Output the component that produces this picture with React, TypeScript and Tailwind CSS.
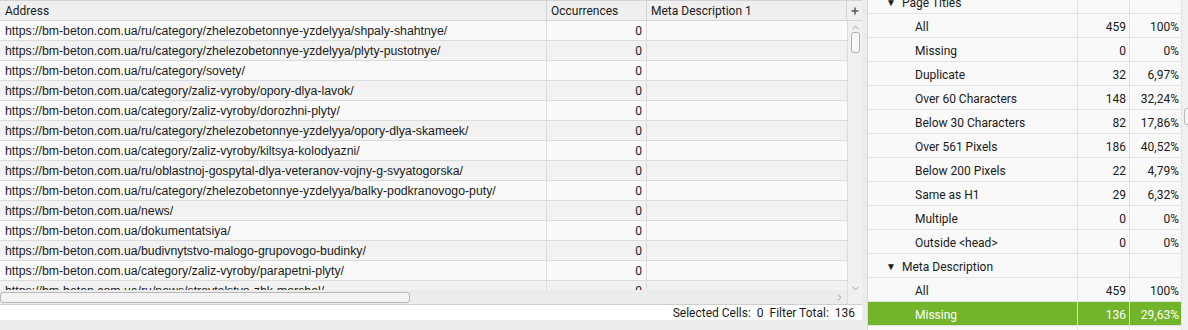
import { ChevronUp, ChevronDown, ChevronRight, Plus } from 'lucide-react';

const urls = [
  'https://bm-beton.com.ua/ru/category/zhelezobetonnye-yzdelyya/shpaly-shahtnye/',
  'https://bm-beton.com.ua/ru/category/zhelezobetonnye-yzdelyya/plyty-pustotnye/',
  'https://bm-beton.com.ua/ru/category/sovety/',
  'https://bm-beton.com.ua/category/zaliz-vyroby/opory-dlya-lavok/',
  'https://bm-beton.com.ua/category/zaliz-vyroby/dorozhni-plyty/',
  'https://bm-beton.com.ua/ru/category/zhelezobetonnye-yzdelyya/opory-dlya-skameek/',
  'https://bm-beton.com.ua/category/zaliz-vyroby/kiltsya-kolodyazni/',
  'https://bm-beton.com.ua/ru/oblastnoj-gospytal-dlya-veteranov-vojny-g-svyatogorska/',
  'https://bm-beton.com.ua/ru/category/zhelezobetonnye-yzdelyya/balky-podkranovogo-puty/',
  'https://bm-beton.com.ua/news/',
  'https://bm-beton.com.ua/dokumentatsiya/',
  'https://bm-beton.com.ua/budivnytstvo-malogo-grupovogo-budinky/',
  'https://bm-beton.com.ua/category/zaliz-vyroby/parapetni-plyty/',
  'https://bm-beton.com.ua/ru/news/stroytelstvo-zhk-marshal/',
];

type Row = { label: string; count?: string; pct?: string; group?: boolean; active?: boolean };

const overview: Row[] = [
  { label: 'Page Titles', group: true },
  { label: 'All', count: '459', pct: '100%' },
  { label: 'Missing', count: '0', pct: '0%' },
  { label: 'Duplicate', count: '32', pct: '6,97%' },
  { label: 'Over 60 Characters', count: '148', pct: '32,24%' },
  { label: 'Below 30 Characters', count: '82', pct: '17,86%' },
  { label: 'Over 561 Pixels', count: '186', pct: '40,52%' },
  { label: 'Below 200 Pixels', count: '22', pct: '4,79%' },
  { label: 'Same as H1', count: '29', pct: '6,32%' },
  { label: 'Multiple', count: '0', pct: '0%' },
  { label: 'Outside <head>', count: '0', pct: '0%' },
  { label: 'Meta Description', group: true },
  { label: 'All', count: '459', pct: '100%' },
  { label: 'Missing', count: '136', pct: '29,63%', active: true },
  { label: '', count: '', pct: '' },
];

const roboto = "font-['Roboto',sans-serif]";

export default function App() {
  return (
    <div className={`w-[1188px] h-[330px] bg-[#ececec] flex overflow-hidden text-[12px] text-[#1a1a1a] ${roboto}`}>
      {/* left: results table */}
      <div className="w-[862px] flex flex-col shrink-0">
        <div className="h-[304px] flex flex-col bg-[#f5f5f5] border-t border-[#d4d4d4]">
          <div className="flex h-[20px] bg-[#efefef] border-b border-[#d4d4d4] shrink-0">
            <div className="w-[547px] pl-[5px] leading-[20px] border-r border-[#d4d4d4]">Address</div>
            <div className="w-[100px] pl-[4px] leading-[20px] border-r border-[#d4d4d4]">Occurrences</div>
            <div className="w-[200px] pl-[4px] leading-[20px] border-r border-[#d4d4d4]">Meta Description 1</div>
            <div className="flex-1 flex items-center justify-center">
              <Plus size={10} strokeWidth={3.5} className="text-[#555]" />
            </div>
          </div>
          <div className="flex flex-1 min-h-0">
            <div className="w-[847px] flex flex-col">
              <div className="h-[269px] overflow-hidden">
                {urls.map((u, i) => (
                  <div
                    key={i}
                    className={`flex h-[20px] border-b border-[#dcdcdc] ${i % 2 === 0 ? 'bg-[#fafafa]' : 'bg-[#f2f2f2]'}`}
                  >
                    <div className="w-[547px] pl-[5px] pt-[1px] leading-[19px] border-r border-[#dcdcdc] font-['Liberation_Sans',sans-serif] text-[12.3px] whitespace-nowrap overflow-hidden">
                      {u}
                    </div>
                    <div className="w-[100px] pr-[4px] pt-[1px] leading-[19px] text-right border-r border-[#dcdcdc]">0</div>
                    <div className="flex-1" />
                  </div>
                ))}
              </div>
              <div className="h-[14px] bg-[#ececec] flex items-center pr-[2px]">
                <div className="w-[410px] h-[11px] rounded-[3px] border border-[#b9b9b9] bg-[#f3f3f3]" />
                <div className="flex-1" />
                <ChevronRight size={11} className="text-[#9a9a9a]" />
              </div>
            </div>
            <div className="flex-1 bg-[#f0f0f0] border-l border-[#dcdcdc] flex flex-col items-center">
              <ChevronUp size={11} className="text-[#9a9a9a] mt-[1px]" />
              <div className="w-[9px] h-[21px] rounded-[3px] border border-[#b0b0b0] bg-[#f7f7f7] mt-[-1px]" />
              <div className="flex-1" />
              <ChevronDown size={11} className="text-[#9a9a9a] mb-[10px]" />
            </div>
          </div>
        </div>
        <div className="h-[16px] bg-white border-t border-[#cfcfcf] flex items-center justify-end pr-[7px] gap-[6px] leading-none">
          <span>Selected Cells:&nbsp; 0</span>
          <span>Filter Total:&nbsp; 136</span>
        </div>
        <div className="flex-1" />
      </div>

      {/* right: overview tree */}
      <div className="ml-[5px] flex-1 flex overflow-hidden">
        <div className="w-[315px] border-l border-[#d8d8d8] bg-[#f9f9f9] overflow-hidden">
          <div className="-mt-[10px]">
            {overview.map((r, i) => (
              <div
                key={i}
                className={`flex h-[24px] border-b border-[#e2e2e2] ${r.active ? 'bg-[#72b52a] text-white' : ''}`}
              >
                <div className="w-[210px] flex items-center pt-[2px] border-r border-[#e2e2e2]">
                  {r.group ? (
                    <>
                      <span className="ml-[18px] w-[16px] text-[10px]">▼</span>
                      <span>{r.label}</span>
                    </>
                  ) : (
                    <span className="ml-[47px]">{r.label}</span>
                  )}
                </div>
                <div className="w-[52px] flex items-center justify-end pt-[2px] pr-[3px] border-r border-[#e2e2e2]">{r.count}</div>
                <div className="flex-1 flex items-center justify-end pt-[2px] pr-[2px] border-r border-[#e2e2e2]">{r.pct}</div>
              </div>
            ))}
          </div>
        </div>
        <div className="flex-1 bg-[#f0f0f0] relative">
          <div className="absolute left-[2px] top-[108px] w-[8px] h-[17px] rounded-[3px] border border-[#b8b8b8] bg-[#f7f7f7]" />
        </div>
      </div>
    </div>
  );
}
